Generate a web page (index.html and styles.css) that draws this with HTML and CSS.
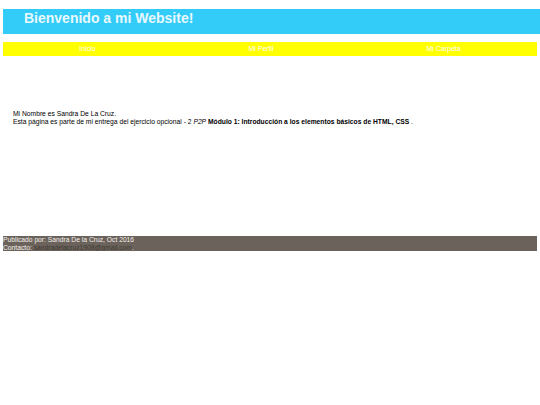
FILE: index.html
```html
<!DOCTYPE html>
<html lang="es">
<head>
<meta charset="utf-8">
<title>Bienvenido</title>
<link rel="stylesheet" href="styles.css">
</head>
<body>
<header class="site-header">
  <h1 class="title">Bienvenido a mi Website!</h1>
</header>
<nav class="nav">
  <a class="nav-item" href="#">Inicio</a>
  <a class="nav-item" href="#">Mi Perfil</a>
  <a class="nav-item" href="#">Mi Carpeta</a>
</nav>
<main class="content">
  <p class="line">Mi Nombre es Sandra De La Cruz.</p>
  <p class="line">Esta página es parte de mi entrega del ejercicio opcional - 2 <em>P2P</em> <strong>Módulo 1: Introducción a los elementos básicos de HTML, CSS</strong> .</p>
</main>
<footer class="footer">
  <p class="line">Publicado por: Sandra De la Cruz, Oct 2016</p>
  <p class="line">Contacto: <a class="mail" href="#">sandradelacruz1908@gmail.com</a>.</p>
</footer>
</body>
</html>
```

FILE: styles.css
```css
html, body {
  margin: 0;
  padding: 0;
  background: #ffffff;
}
body {
  font-family: "Liberation Sans", Arial, sans-serif;
  font-size: 6.73px;
  line-height: 8px;
  color: #000000;
  padding: 9px 0 0 3px;
}
.site-header {
  background: #33ccf8;
  height: 25px;
  margin-bottom: 8px;
}
.title {
  margin: 0;
  padding: 1px 0 0 21px;
  font-size: 14px;
  line-height: 17px;
  font-weight: bold;
  color: #e8f8ff;
}
.nav {
  display: flex;
  justify-content: space-around;
  background: #ffff00;
  height: 14px;
  width: 534px;
  align-items: center;
}
.nav-item {
  color: #ffffff;
  text-decoration: none;
  font-size: 7px;
  line-height: 14px;
}
.content {
  padding: 54px 0 0 10px;
  height: 126px;
}
.line {
  margin: 0;
}
.footer {
  background: #6b635b;
  color: #f4f0ec;
  width: 534px;
  height: 15px;
}
.mail {
  color: #3e3a36;
  text-decoration: underline;
}
```
